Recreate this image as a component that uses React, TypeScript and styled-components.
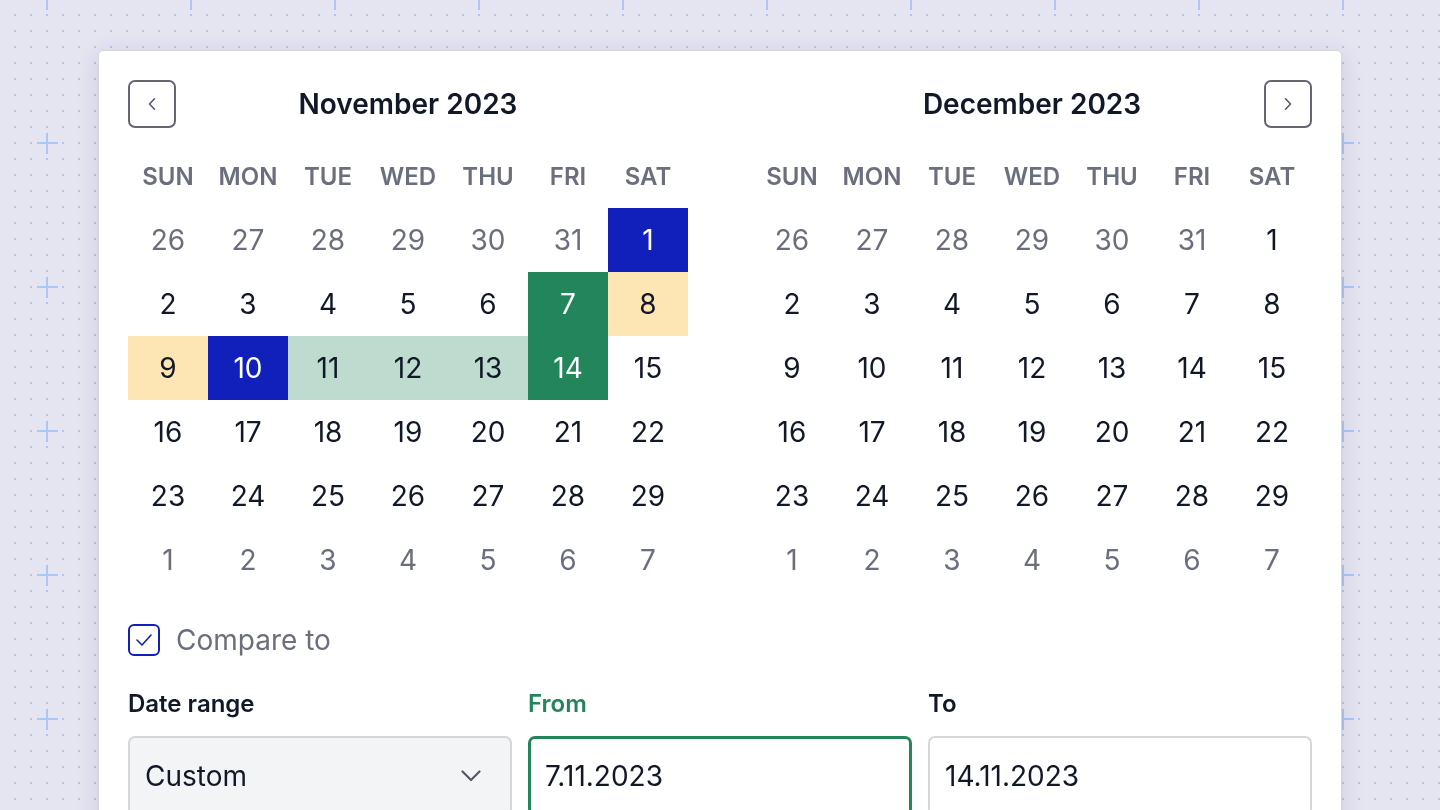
import React from "react";
import styled, { createGlobalStyle } from "styled-components";

const GlobalStyle = createGlobalStyle`
  html, body {
    margin: 0;
    padding: 0;
    background: #e5e4f1;
    font-family: Inter, "Noto Sans", sans-serif;
    color: #111827;
  }
  * { box-sizing: border-box; }
`;

const Backdrop = styled.svg`
  position: fixed;
  inset: 0;
  width: 100%;
  height: 100%;
  z-index: 0;
`;

const Page = styled.div`
  position: relative;
  z-index: 1;
  min-height: 810px;
  padding: 50px 98px 0 98px;
`;

const Card = styled.div`
  background: #ffffff;
  border: 1px solid #d4d6dc;
  border-radius: 5px;
  box-shadow: 0 4px 22px rgba(30, 30, 70, 0.12);
  padding: 29px 29px 40px 29px;
`;

const Months = styled.div`
  display: grid;
  grid-template-columns: 560px 560px;
  column-gap: 64px;
`;

const Month = styled.div`
  display: flex;
  flex-direction: column;
`;

const MonthHeader = styled.div`
  display: grid;
  grid-template-columns: 48px 1fr 48px;
  align-items: center;
  height: 48px;
  margin-bottom: 16px;
`;

const Title = styled.h2`
  grid-column: 2;
  grid-row: 1;
  margin: 0;
  text-align: center;
  font-size: 28px;
  font-weight: 600;
  color: #111827;
`;

const NavButton = styled.button<{ $side: "left" | "right" }>`
  grid-column: ${(p) => (p.$side === "left" ? 1 : 3)};
  grid-row: 1;
  width: 48px;
  height: 48px;
  border: 2px solid #646673;
  border-radius: 7px;
  background: #fff;
  display: flex;
  align-items: center;
  justify-content: center;
  padding: 0;
  color: #555866;
`;

const Grid = styled.div`
  display: grid;
  grid-template-columns: repeat(7, 80px);
  grid-auto-rows: 64px;
`;

const WeekDay = styled.div`
  display: flex;
  align-items: center;
  justify-content: center;
  font-size: 24px;
  font-weight: 600;
  color: #6b6e7c;
`;

type Tone = "none" | "blue" | "green" | "light" | "yellow";

const toneBg: Record<Tone, string> = {
  none: "transparent",
  blue: "#1120bb",
  green: "#22865a",
  light: "#bddbcf",
  yellow: "#fee6b4",
};

const Day = styled.div<{ $tone: Tone; $muted: boolean }>`
  display: flex;
  align-items: center;
  justify-content: center;
  font-size: 28px;
  font-weight: 400;
  background: ${(p) => toneBg[p.$tone]};
  color: ${(p) =>
    p.$tone === "blue" || p.$tone === "green"
      ? "#ffffff"
      : p.$muted
      ? "#6b6e7c"
      : "#111827"};
`;

const CompareRow = styled.label`
  display: flex;
  align-items: center;
  gap: 16px;
  margin-top: 32px;
  height: 32px;
`;

const CheckBox = styled.span`
  width: 32px;
  height: 32px;
  border: 2px solid #1120bb;
  border-radius: 6px;
  display: flex;
  align-items: center;
  justify-content: center;
  color: #1120bb;
`;

const CompareText = styled.span`
  font-size: 28px;
  color: #6b6e7c;
`;

const Fields = styled.div`
  display: grid;
  grid-template-columns: repeat(3, 1fr);
  column-gap: 16px;
  margin-top: 32px;
`;

const Field = styled.div`
  display: flex;
  flex-direction: column;
  gap: 16px;
`;

const Label = styled.div<{ $accent?: boolean }>`
  font-size: 24px;
  font-weight: 600;
  line-height: 32px;
  color: ${(p) => (p.$accent ? "#22865a" : "#111827")};
`;

const Box = styled.div<{ $variant: "select" | "active" | "plain" }>`
  height: 80px;
  display: flex;
  align-items: center;
  justify-content: space-between;
  border-radius: 7px;
  font-size: 28px;
  color: #111827;
  background: ${(p) => (p.$variant === "select" ? "#f3f4f6" : "#ffffff")};
  border: ${(p) =>
    p.$variant === "active" ? "3px solid #22865a" : "2px solid #d4d6dc"};
  padding: ${(p) => (p.$variant === "active" ? "0 14px" : "0 15px")};
`;

const Chevron = styled.svg`
  margin-right: 14px;
  color: #555866;
`;

type Cell = { n: number; muted?: boolean; tone?: Tone };

const weekDays = ["SUN", "MON", "TUE", "WED", "THU", "FRI", "SAT"];

const buildRows = (tones: Record<number, Tone>): Cell[] => {
  const cells: Cell[] = [];
  [26, 27, 28, 29, 30, 31].forEach((n) => cells.push({ n, muted: true }));
  for (let n = 1; n <= 29; n++) cells.push({ n, tone: tones[n] });
  for (let n = 1; n <= 7; n++) cells.push({ n, muted: true });
  return cells;
};

const novCells = buildRows({
  1: "blue",
  7: "green",
  8: "yellow",
  9: "yellow",
  10: "blue",
  11: "light",
  12: "light",
  13: "light",
  14: "green",
});
const decCells = buildRows({});

const MonthView: React.FC<{ title: string; cells: Cell[]; nav: "left" | "right" }> = ({
  title,
  cells,
  nav,
}) => (
  <Month>
    <MonthHeader>
      {nav === "left" && (
        <NavButton $side="left" aria-label="Previous month">
          <svg width="12" height="14" viewBox="0 0 12 14" fill="none">
            <path d="M8.5 1.8 L3.5 7 L8.5 12.2" stroke="currentColor" strokeWidth="1.6" strokeLinecap="round" strokeLinejoin="round" />
          </svg>
        </NavButton>
      )}
      <Title>{title}</Title>
      {nav === "right" && (
        <NavButton $side="right" aria-label="Next month">
          <svg width="12" height="14" viewBox="0 0 12 14" fill="none">
            <path d="M3.5 1.8 L8.5 7 L3.5 12.2" stroke="currentColor" strokeWidth="1.6" strokeLinecap="round" strokeLinejoin="round" />
          </svg>
        </NavButton>
      )}
    </MonthHeader>
    <Grid>
      {weekDays.map((d) => (
        <WeekDay key={d}>{d}</WeekDay>
      ))}
      {cells.map((c, i) => (
        <Day key={i} $tone={c.tone ?? "none"} $muted={!!c.muted}>
          {c.n}
        </Day>
      ))}
    </Grid>
  </Month>
);

export default function App() {
  return (
    <>
      <GlobalStyle />
      <Backdrop aria-hidden="true">
        <defs>
          <pattern id="dots" x="0" y="0" width="16" height="16" patternUnits="userSpaceOnUse">
            <rect x="14" y="14" width="2" height="2" fill="#a9c8f4" />
          </pattern>
          <pattern id="plus" x="-25" y="-73" width="144" height="144" patternUnits="userSpaceOnUse">
            <rect x="62" y="71" width="21" height="2" fill="#a9c8f4" />
            <rect x="71" y="62" width="2" height="21" fill="#a9c8f4" />
          </pattern>
        </defs>
        <rect width="100%" height="100%" fill="url(#dots)" />
        <rect width="100%" height="100%" fill="url(#plus)" />
      </Backdrop>
      <Page>
        <Card>
          <Months>
            <MonthView title="November 2023" cells={novCells} nav="left" />
            <MonthView title="December 2023" cells={decCells} nav="right" />
          </Months>
          <CompareRow>
            <CheckBox>
              <svg width="20" height="20" viewBox="0 0 20 20" fill="none">
                <path d="M3 10 L8 15 L17 5" stroke="currentColor" strokeWidth="1.6" strokeLinecap="round" strokeLinejoin="round" />
              </svg>
            </CheckBox>
            <CompareText>Compare to</CompareText>
          </CompareRow>
          <Fields>
            <Field>
              <Label>Date range</Label>
              <Box $variant="select">
                <span>Custom</span>
                <Chevron width="20" height="12" viewBox="0 0 20 12" fill="none">
                  <path d="M1.5 1.5 L10 10 L18.5 1.5" stroke="currentColor" strokeWidth="2.2" strokeLinecap="round" strokeLinejoin="round" />
                </Chevron>
              </Box>
            </Field>
            <Field>
              <Label $accent>From</Label>
              <Box $variant="active">7.11.2023</Box>
            </Field>
            <Field>
              <Label>To</Label>
              <Box $variant="plain">14.11.2023</Box>
            </Field>
          </Fields>
        </Card>
      </Page>
    </>
  );
}
